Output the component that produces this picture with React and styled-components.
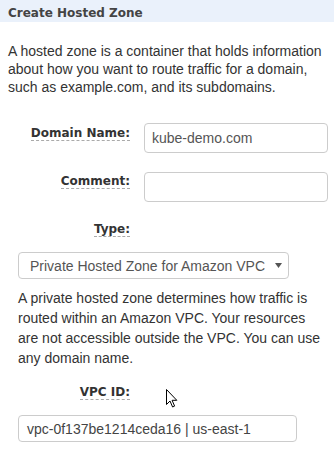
import React from "react";
import styled, { createGlobalStyle } from "styled-components";

const Global = createGlobalStyle`
  html, body { margin: 0; padding: 0; background: #fff; }
  body { font-family: "Liberation Sans", Arial, sans-serif; }
  * { box-sizing: border-box; }
`;

const Page = styled.div`
  position: relative;
  width: 334px;
  height: 449px;
  overflow: hidden;
  background: #fff;
`;

const Header = styled.div`
  height: 22px;
  padding: 7px 0 0 8px;
  background: #eaf1fb;
  font-family: "DejaVu Sans", Verdana, sans-serif;
  font-weight: bold;
  font-size: 12px;
  line-height: 13px;
  color: #444;
`;

const Text = styled.p`
  margin: ${(p) => p.$mt}px 0 0 0;
  font-size: 14px;
  line-height: ${(p) => p.$lh}px;
  color: #333;
`;

const Intro = styled(Text)`
  padding: 0 8px;
`;

const Form = styled.div`
  padding: 0 6px 0 18px;
`;

const Row = styled.div`
  display: flex;
  align-items: flex-start;
  gap: 14px;
  margin-top: ${(p) => p.$mt}px;
`;

const LabelCell = styled.div`
  width: 112px;
  flex: none;
  display: flex;
  justify-content: flex-end;
  padding-top: ${(p) => p.$pt || 0}px;
`;

const Label = styled.span`
  font-family: "DejaVu Sans", Verdana, sans-serif;
  font-weight: bold;
  font-size: 12px;
  line-height: 13px;
  color: #333;
  border-bottom: 1px dashed #aaa;
`;

const Field = styled.div`
  width: ${(p) => p.$w}px;
  height: ${(p) => p.$h}px;
  margin-top: ${(p) => p.$mt || 0}px;
  border: 1px solid #ccc;
  border-radius: 4px;
  background: #fff;
  display: flex;
  align-items: center;
  justify-content: space-between;
  padding: 0 ${(p) => p.$pr || 8}px 0 ${(p) => p.$pl || 7}px;
  font-size: 14px;
  color: ${(p) => p.$color || "#555"};
  white-space: nowrap;
`;

const Arrow = styled.svg`
  flex: none;
  display: block;
`;

const Cursor = styled.svg`
  position: absolute;
  left: 165px;
  top: 388px;
`;

export default function App() {
  return (
    <Page>
      <Global />
      <Header>Create Hosted Zone</Header>
      <Intro $mt={20} $lh={18}>
        A hosted zone is a container that holds information about how you want
        to route traffic for a domain, such as example.com, and its subdomains.
      </Intro>
      <Form>
        <Row $mt={27}>
          <LabelCell $pt={4}>
            <Label>Domain Name:</Label>
          </LabelCell>
          <Field $w={184} $h={30}>kube-demo.com</Field>
        </Row>
        <Row $mt={19}>
          <LabelCell $pt={3}>
            <Label>Comment:</Label>
          </LabelCell>
          <Field $w={184} $h={30} />
        </Row>
        <Row $mt={21}>
          <LabelCell>
            <Label>Type:</Label>
          </LabelCell>
        </Row>
        <Field $w={271} $h={27} $mt={15} $pl={11} $pr={6}>
          Private Hosted Zone for Amazon VPC
          <Arrow width="7" height="5" viewBox="0 0 7 5">
            <path d="M0 0 L7 0 L3.5 5 Z" fill="#555" />
          </Arrow>
        </Field>
        <Text $mt={9} $lh={20}>
          A private hosted zone determines how traffic is routed within an
          Amazon VPC. Your resources are not accessible outside the VPC. You can
          use any domain name.
        </Text>
        <Row $mt={18}>
          <LabelCell>
            <Label>VPC ID:</Label>
          </LabelCell>
        </Row>
        <Field $w={279} $h={27} $mt={15} $pl={8} $color="#444">
          vpc-0f137be1214ceda16 | us-east-1
        </Field>
      </Form>
      <Cursor width="13" height="21" viewBox="0 0 13 21">
        <path
          d="M1.5 1.5 L1.5 16.5 L5 13 L7.6 19 L9.6 18.1 L7.1 12.3 L11.8 12.3 Z"
          fill="#fff"
          stroke="#000"
          strokeWidth="1"
          strokeLinejoin="miter"
        />
      </Cursor>
    </Page>
  );
}
